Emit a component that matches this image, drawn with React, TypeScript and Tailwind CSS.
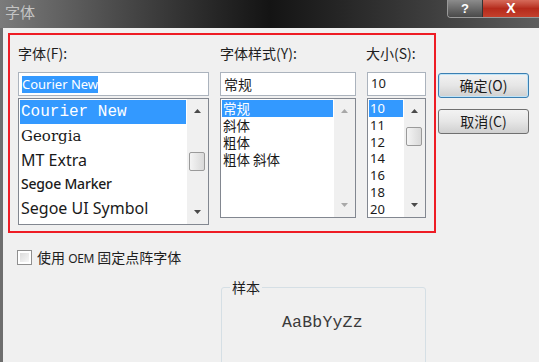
import React from 'react';

const CJK = "font-['Noto_Sans_CJK_SC','Noto_Sans',sans-serif]";

function Arrow({ up, dim }: { up?: boolean; dim?: boolean }) {
  return (
    <svg width="7" height="4" viewBox="0 0 7 4">
      <path d={up ? 'M0 4 L3.5 0 L7 4 Z' : 'M0 0 L3.5 4 L7 0 Z'} fill={dim ? '#a8a8a8' : '#4a4a4a'} />
    </svg>
  );
}

// vertical scrollbar; thumbTop/thumbH in px from track top, omit for a disabled bar
function ScrollBar({ thumbTop, thumbH, dim }: { thumbTop?: number; thumbH?: number; dim?: boolean }) {
  return (
    <div className="relative w-[21px] h-full bg-[#f0f0f0] flex flex-col items-center justify-between py-[10px]">
      <Arrow up dim={dim} />
      {thumbTop !== undefined && (
        <div
          className="absolute left-[2px] right-[3px] rounded-[2px] border border-[#9a9a9a] bg-gradient-to-r from-[#f4f4f4] to-[#d9d9d9]"
          style={{ top: thumbTop, height: thumbH }}
        />
      )}
      <Arrow dim={dim} />
    </div>
  );
}

function Field({ children, selected }: { children: React.ReactNode; selected?: boolean }) {
  return (
    <div className="h-[24px] border border-[#abb3bd] bg-white flex items-center px-[3px]">
      {selected ? <span className="bg-[#3399ff] text-white leading-[17px]">{children}</span> : children}
    </div>
  );
}

function DlgButton({ label, primary }: { label: string; primary?: boolean }) {
  return (
    <div
      className={
        'w-[91px] h-[25px] rounded-[3px] flex items-center justify-center text-[14px] text-[#1b1b1b] bg-gradient-to-b from-[#f3f3f3] via-[#e6e6e6] to-[#d0d0d0] ' +
        (primary
          ? 'border border-[#3c7fb1] shadow-[0_0_0_1px_#bfe4f8_inset]'
          : 'border border-[#707070]')
      }
    >
      {label}
    </div>
  );
}

const fonts = [
  { name: 'Courier New', cls: "font-['Liberation_Mono',monospace] text-[16px]" },
  { name: 'Georgia', cls: "font-['DejaVu_Serif',serif] text-[15px]" },
  { name: 'MT Extra', cls: "font-['Noto_Sans',sans-serif] text-[16px]" },
  { name: 'Segoe Marker', cls: "font-['Noto_Sans',sans-serif] text-[14px] font-medium tracking-[-0.2px]" },
  { name: 'Segoe UI Symbol', cls: "font-['Noto_Sans',sans-serif] text-[16px]" },
];

const styles = ['常规', '斜体', '粗体', '粗体 斜体'];
const sizes = ['10', '11', '12', '14', '16', '18', '20'];

export default function App() {
  return (
    <div className={`w-[539px] h-[362px] overflow-hidden bg-[#f0f0f0] flex flex-col ${CJK}`}>
      {/* Title bar */}
      <div className="h-[28px] flex-shrink-0 flex justify-between bg-gradient-to-r from-[#7b7b7b] via-[#141414] to-[#5e5e5e]">
        <span className="pl-[5px] pt-[2px] text-[15px] leading-[20px] text-[#c4c4c4]">字体</span>
        <div className="flex items-start pr-0">
          <div className="flex h-[18px] rounded-bl-[4px] border-b border-l border-[#9a9a9a] overflow-hidden">
            <div className="w-[35px] flex items-center justify-center bg-gradient-to-b from-[#8c8c8c] to-[#4a4a4a] border-r border-[#333] text-white font-bold text-[13px] font-['Liberation_Sans',sans-serif]">
              ?
            </div>
            <div className="w-[56px] flex items-center justify-center bg-gradient-to-b from-[#d66a5a] via-[#b52a1b] to-[#c4402c] text-white font-bold text-[14px] font-['Liberation_Sans',sans-serif]">
              X
            </div>
          </div>
        </div>
      </div>

      {/* Body */}
      <div className="flex-1 border-l-[3px] border-[#6e6e6e] relative">
        <div className="flex items-start">
          {/* Red highlight frame */}
          <div className="ml-[5px] mt-[5px] w-[428px] h-[200px] border-2 border-[#ee1c25] flex gap-[11px] pl-[8px] text-[14px] text-[#1e1e1e]">
            {/* Font column */}
            <div className="w-[191px] flex flex-col">
              <div className="pt-[9px] h-[37px] leading-[18px]">字体(F):</div>
              <div className="font-['Noto_Sans',sans-serif] text-[13px]">
                <Field selected>Courier New</Field>
              </div>
              <div className="mt-[2px] h-[127px] border border-[#828790] bg-white flex">
                <div className="flex-1 p-[1px]">
                  {fonts.map((f, i) => (
                    <div
                      key={f.name}
                      className={`h-[24px] leading-[24px] pl-[1px] whitespace-nowrap ${f.cls} ${i === 0 ? 'bg-[#3399ff] text-white' : 'text-[#1a1a1a]'}`}
                    >
                      {f.name}
                    </div>
                  ))}
                </div>
                <ScrollBar thumbTop={53} thumbH={19} />
              </div>
            </div>

            {/* Style column */}
            <div className="w-[136px] flex flex-col">
              <div className="pt-[9px] h-[37px] leading-[18px]">字体样式(Y):</div>
              <Field>常规</Field>
              <div className="mt-[2px] h-[120px] border border-[#828790] bg-white flex">
                <div className="flex-1 p-[1px] text-[13.5px]">
                  {styles.map((s, i) => (
                    <div
                      key={s}
                      className={`h-[17px] flex items-center pl-[1px] whitespace-pre ${i === 0 ? 'bg-[#3399ff] text-white' : 'text-[#1a1a1a]'}`}
                    >
                      <span className="leading-[15px]">{s}</span>
                    </div>
                  ))}
                </div>
                <ScrollBar dim />
              </div>
            </div>

            {/* Size column */}
            <div className="w-[59px] flex flex-col">
              <div className="pt-[9px] h-[37px] leading-[18px] -ml-[1px]">大小(S):</div>
              <div className="font-['Noto_Sans',sans-serif] text-[13px]">
                <Field>10</Field>
              </div>
              <div className="mt-[2px] h-[120px] border border-[#828790] bg-white flex font-['Noto_Sans',sans-serif] text-[13px]">
                <div className="flex-1 p-[1px]">
                  {sizes.map((s, i) => (
                    <div
                      key={s}
                      className={`h-[16.8px] leading-[16.8px] pl-[1px] ${i === 0 ? 'bg-[#3399ff] text-white' : 'text-[#1a1a1a]'}`}
                    >
                      {s}
                    </div>
                  ))}
                </div>
                <ScrollBar thumbTop={28} thumbH={19} />
              </div>
            </div>
          </div>

          {/* Dialog buttons */}
          <div className="ml-[2px] mt-[45px] flex flex-col gap-[11px]">
            <DlgButton label="确定(O)" primary />
            <DlgButton label="取消(C)" />
          </div>
        </div>

        {/* OEM checkbox */}
        <div className="mt-[14px] ml-[14px] flex items-center gap-[5px] text-[14px] text-[#1e1e1e]">
          <div className="w-[15px] h-[15px] border border-[#8f8f8f] bg-white p-[2px]">
            <div className="w-full h-full bg-gradient-to-br from-[#dcdcdc] to-[#f7f7f7]" />
          </div>
          <span>
            使用 <span className="font-['Noto_Sans',sans-serif] text-[12px] tracking-[-0.3px]">OEM</span> 固定点阵字体
          </span>
        </div>

        {/* Sample group */}
        <div className="ml-[218px] mt-[19px] w-[205px] h-[90px] border border-[#d5dfe5] rounded-[3px] relative">
          <span className="absolute -top-[11px] left-[8px] px-[2px] bg-[#f0f0f0] text-[14px] leading-[20px] text-[#1e1e1e]">
            样本
          </span>
          <div className="pt-[24px] pl-[60px] font-['Liberation_Mono',monospace] text-[16.5px] leading-[22px] text-[#3a3a3a] tracking-[0.2px]">
            AaBbYyZz
          </div>
        </div>
      </div>
    </div>
  );
}
